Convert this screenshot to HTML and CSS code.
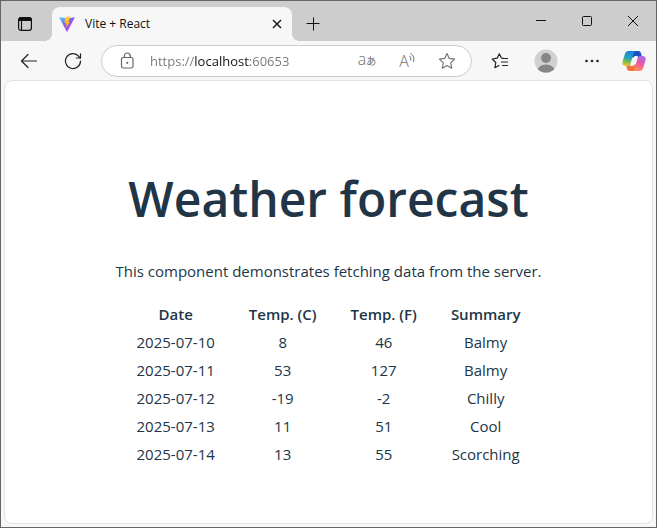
FILE: index.html
```html
<!DOCTYPE html>
<html lang="en">
<head>
<meta charset="utf-8">
<meta name="viewport" content="width=device-width, initial-scale=1">
<title>Vite + React</title>
<link rel="stylesheet" href="styles.css">
</head>
<body>
<div class="window">
  <header class="titlebar">
    <button class="tab-actions" type="button" aria-label="Tab actions">
      <svg width="16" height="16" viewBox="0 0 16 16" fill="none" stroke="#111" stroke-width="1.2"><rect x="1.6" y="1.6" width="12.8" height="12.8" rx="2.4"/><path d="M1.600 4.500V4A2.400 2.400 0 0 1 4 1.600h8A2.400 2.400 0 0 1 14.400 4v.5z" fill="#111"/><path d="M4.500 5v9"/></svg>
    </button>
    <div class="tab">
      <svg class="favicon" width="16" height="16" viewBox="0 0 16 16"><defs><linearGradient id="vite" x1="0" y1="0" x2=".7" y2="1"><stop offset="0" stop-color="#41d1ff"/><stop offset=".5" stop-color="#8a5cf0"/><stop offset="1" stop-color="#bd34fe"/></linearGradient><linearGradient id="bolt" x1="0" y1="0" x2="0" y2="1"><stop offset="0" stop-color="#ffd43a"/><stop offset="1" stop-color="#ffa800"/></linearGradient></defs><path d="M.3 1.800 7.700 15.500q.3.500.6 0L15.700 1.800q.2-.6-.4-.5L8 2.500.7 1.300Q.1 1.200.3 1.800z" fill="url(#vite)"/><path d="M11.400.2 6 1.200 5.600 7l1.500-.3-.4 2.100 1-.3-.7 3.400L11 5.900l-1.700.3z" fill="url(#bolt)"/></svg>
      <span class="tab-title">Vite + React</span>
      <button class="tab-close" type="button" aria-label="Close tab">
        <svg width="10" height="10" viewBox="0 0 10 10" fill="none" stroke="#111" stroke-width="1.400"><path d="M1 1l8 8M9 1 1 9"/></svg>
      </button>
    </div>
    <button class="new-tab" type="button" aria-label="New tab">
      <svg width="14" height="14" viewBox="0 0 14 14" fill="none" stroke="#111"><path d="M7.500.5v13M.5 6.500h13"/></svg>
    </button>
    <div class="window-controls">
      <button type="button" aria-label="Minimize"><svg width="10" height="10" viewBox="0 0 10 10" fill="none" stroke="#111"><path d="M0 4.500h10"/></svg></button>
      <button type="button" aria-label="Maximize"><svg width="10" height="10" viewBox="0 0 10 10" fill="none" stroke="#111"><rect x=".5" y=".5" width="9" height="9" rx="1"/></svg></button>
      <button type="button" aria-label="Close"><svg width="10" height="10" viewBox="0 0 10 10" fill="none" stroke="#111"><path d="M0 0l10 10M10 0 0 10"/></svg></button>
    </div>
  </header>

  <nav class="toolbar" aria-label="Browser toolbar">
    <button class="nav-button" type="button" aria-label="Back">
      <svg width="18" height="16" viewBox="0 0 18 16" fill="none" stroke="#222" stroke-width="1.200" stroke-linecap="round" stroke-linejoin="round"><path d="M16.500 8H1.500M8 1.500 1.500 8 8 14.500"/></svg>
    </button>
    <button class="nav-button" type="button" aria-label="Refresh">
      <svg width="18" height="18" viewBox="0 0 18 18" fill="none" stroke="#222" stroke-width="1.200" stroke-linecap="round" stroke-linejoin="round"><path d="M16.500 9A7.500 7.500 0 1 1 14.800 4.300L16.200 6"/><path d="M16.500 1.800V6h-4.200"/></svg>
    </button>
    <form class="address">
      <svg class="lock" width="20" height="20" viewBox="0 0 20 20" fill="none" stroke="#666" stroke-width="1.200"><rect x="4.500" y="6.500" width="11.500" height="10.500" rx="1.800"/><path d="M7.300 6.500V5a3 3 0 0 1 6 0v1.500"/><circle cx="10.300" cy="11.800" r=".5" fill="#666"/></svg>
      <input class="url" type="text" aria-label="Address" value="https://localhost:60653">
      <button class="translate" type="button" aria-label="Translate"><span>a</span><span class="kana" lang="ja">あ</span></button>
      <button class="read-aloud" type="button" aria-label="Read aloud"><span>A</span><svg width="6" height="10" viewBox="0 0 6 10" fill="none" stroke="#707070" stroke-linecap="round"><path d="M.7 3Q2.600 4.600 1.800 7.300M1.800.6Q6.200 3.600 4.600 8.600"/></svg></button>
      <button type="button" aria-label="Add to favorites">
        <svg width="18" height="18" viewBox="0 0 18 18" fill="none" stroke="#707070" stroke-width="1.100" stroke-linejoin="round"><path d="m9 1.500 2.300 4.900 5.300.7-3.900 3.700 1 5.400L9 13.600l-4.700 2.600 1-5.400L1.400 7.100l5.300-.7z"/></svg>
      </button>
    </form>
    <button class="tool-button" type="button" aria-label="Favorites">
      <svg width="18" height="18" viewBox="0 0 18 18" fill="none" stroke="#222" stroke-width="1.200" stroke-linecap="round" stroke-linejoin="round"><path d="M13 6.500 10.400 6 8.300 1.800 6.200 6.200 1.200 7l3.600 3.500-.9 5.200 4-2.200M11.500 6.500h5M10.500 10h6M11.500 13.500h5"/></svg>
    </button>
    <button class="tool-button" type="button" aria-label="Profile">
      <svg width="24" height="24" viewBox="0 0 24 24"><defs><clipPath id="avatar"><circle cx="12" cy="12" r="11.500"/></clipPath></defs><circle cx="12" cy="12" r="11.500" fill="#d0d0d0"/><g fill="#868686" clip-path="url(#avatar)"><circle cx="12" cy="9" r="5"/><ellipse cx="12" cy="21.500" rx="8.500" ry="6"/></g></svg>
    </button>
    <button class="tool-button" type="button" aria-label="Settings and more">
      <svg width="16" height="4" viewBox="0 0 16 4" fill="#222"><circle cx="2.500" cy="2" r="1.300"/><circle cx="8" cy="2" r="1.300"/><circle cx="13.500" cy="2" r="1.300"/></svg>
    </button>
    <button class="copilot" type="button" aria-label="Copilot">
      <svg width="24" height="22" viewBox="0 0 24 22"><defs><linearGradient id="cpl" x1=".5" y1="0" x2=".3" y2="1"><stop offset="0" stop-color="#1d7fe0"/><stop offset=".45" stop-color="#24a5ba"/><stop offset=".75" stop-color="#8bbd45"/><stop offset="1" stop-color="#f3c52a"/></linearGradient><linearGradient id="cpr" x1=".7" y1="0" x2=".3" y2="1"><stop offset="0" stop-color="#a968ed"/><stop offset=".5" stop-color="#ef5aa0"/><stop offset="1" stop-color="#ff9252"/></linearGradient></defs><path d="M6.500 1h10c1.600 0 2.100 1.200 2.500 2.500l.8 2.800-5.300 1.200H9z" fill="#1d50c4"/><path d="M17.500 21h-10c-1.600 0-2.100-1.200-2.500-2.500l-.8-2.800 5.300-1.200H15z" fill="#f2703c"/><path d="M6.500 1H13c-1 .8-1.300 1.800-1.700 3L8.700 13c-.6 1.900-1.400 2.900-3.200 2.900h-2C.8 15.900-.2 14 .6 11.400l2.300-7.500C3.500 2 4.700 1 6.500 1z" fill="url(#cpl)"/><path d="M17.500 21H11c1-.8 1.300-1.800 1.700-3L15.300 9c.6-1.900 1.400-2.900 3.200-2.900h2c2.700 0 3.700 1.900 2.900 4.500l-2.300 7.500c-.6 1.900-1.800 2.900-3.600 2.900z" fill="url(#cpr)"/><path d="M11.800 7.200q.4-1.100 1.600-1.100h3q-1.300.7-1.800 2.300l-2.400 6.400q-.4 1.100-1.600 1.100h-3q1.300-.7 1.800-2.300z" fill="#f7f7f7"/></svg>
    </button>
  </nav>

  <main class="page">
    <h1>Weather forecast</h1>
    <p>This component demonstrates fetching data from the server.</p>
    <table>
      <thead>
        <tr><th>Date</th><th>Temp. (C)</th><th>Temp. (F)</th><th>Summary</th></tr>
      </thead>
      <tbody>
        <tr><td>2025-07-10</td><td>8</td><td>46</td><td>Balmy</td></tr>
        <tr><td>2025-07-11</td><td>53</td><td>127</td><td>Balmy</td></tr>
        <tr><td>2025-07-12</td><td>-19</td><td>-2</td><td>Chilly</td></tr>
        <tr><td>2025-07-13</td><td>11</td><td>51</td><td>Cool</td></tr>
        <tr><td>2025-07-14</td><td>13</td><td>55</td><td>Scorching</td></tr>
      </tbody>
    </table>
  </main>
</div>
</body>
</html>
```
FILE: styles.css
```css
* {
  box-sizing: border-box;
}

body {
  margin: 0;
  font-family: "Open Sans", "Noto Sans", sans-serif;
  color: #213547;
}

button {
  display: flex;
  align-items: center;
  justify-content: center;
  flex: none;
  padding: 0;
  border: 0;
  background: none;
  color: inherit;
  font: inherit;
}

.window {
  display: flex;
  flex-direction: column;
  min-height: 100vh;
  border: 1px solid #666;
  background: #f7f7f7;
}

/* Title bar */
.titlebar {
  display: flex;
  align-items: flex-end;
  height: 40px;
  background: #cdcdcd;
}

.tab-actions {
  width: 48px;
  height: 34px;
  margin-right: 3px;
}

.tab {
  position: relative;
  display: flex;
  align-items: center;
  flex: 0 1 240px;
  height: 34px;
  padding: 0 10px 0 7px;
  border-radius: 8px 8px 0 0;
  background: #f7f7f7;
}

.tab::before,
.tab::after {
  content: "";
  position: absolute;
  bottom: 0;
  width: 8px;
  height: 8px;
}

.tab::before {
  right: 100%;
  background: radial-gradient(circle at 0 0, transparent 8px, #f7f7f7 8px);
}

.tab::after {
  left: 100%;
  background: radial-gradient(circle at 100% 0, transparent 8px, #f7f7f7 8px);
}

.favicon {
  flex: none;
  margin-right: 10px;
}

.tab-title {
  flex: 1;
  color: #111;
  font-size: 12px;
  line-height: 16px;
  white-space: nowrap;
}

.new-tab {
  width: 42px;
  height: 34px;
}

.window-controls {
  display: flex;
  align-self: stretch;
  margin-left: auto;
}

.window-controls button {
  width: 46px;
}

/* Toolbar */
.toolbar {
  display: flex;
  align-items: center;
  height: 39px;
  padding: 0 3px 0 6px;
}

.nav-button {
  width: 44px;
  height: 32px;
}

.address {
  display: flex;
  align-items: center;
  flex: 1;
  min-width: 0;
  height: 32px;
  margin: 0 5px 0 6px;
  padding: 0 4px 0 15px;
  border: 1px solid #ccc;
  border-radius: 16px;
  background: #fff;
}

.lock {
  flex: none;
}

.url {
  flex: 1;
  min-width: 0;
  height: 24px;
  margin-left: 13px;
  padding: 0;
  border: 0;
  outline: 0;
  /* The scheme and the port are dimmed, the host is dark. */
  background: linear-gradient(90deg, #767676 45px, #111 45px, #111 100px, #767676 100px);
  background-clip: text;
  color: transparent;
  font-family: inherit;
  font-size: 13px;
}

.address button {
  width: 40px;
  height: 28px;
  color: #707070;
  font-size: 14px;
}

.address .translate {
  align-items: baseline;
  font-size: 16px;
  font-weight: 300;
  line-height: 24px;
}

.address .kana {
  font-family: "Noto Sans CJK JP", sans-serif;
  font-size: 10px;
  font-weight: 400;
}

.address .read-aloud {
  align-items: flex-start;
  font-size: 16px;
  font-weight: 300;
  line-height: 28px;
}

.read-aloud svg {
  margin-top: 6px;
}

.tool-button {
  width: 46px;
  height: 32px;
}

.copilot {
  width: 38px;
  height: 32px;
}

/* Page */
.page {
  flex: 1;
  margin: 0 3px 3px;
  padding: 88px 32px 48px;
  border: 1px solid #e2e2e2;
  border-radius: 8px;
  background: #fff;
  font-size: 15px;
  line-height: 24px;
  text-align: center;
}

h1 {
  margin: 0 0 30px;
  font-size: 48px;
  font-weight: 600;
  line-height: 60px;
}

p {
  margin: 0 0 16px;
}

table {
  margin: 0 auto;
  border-spacing: 2px;
}

th,
td {
  padding: 1px 16px;
}

th {
  font-weight: 600;
}
```
